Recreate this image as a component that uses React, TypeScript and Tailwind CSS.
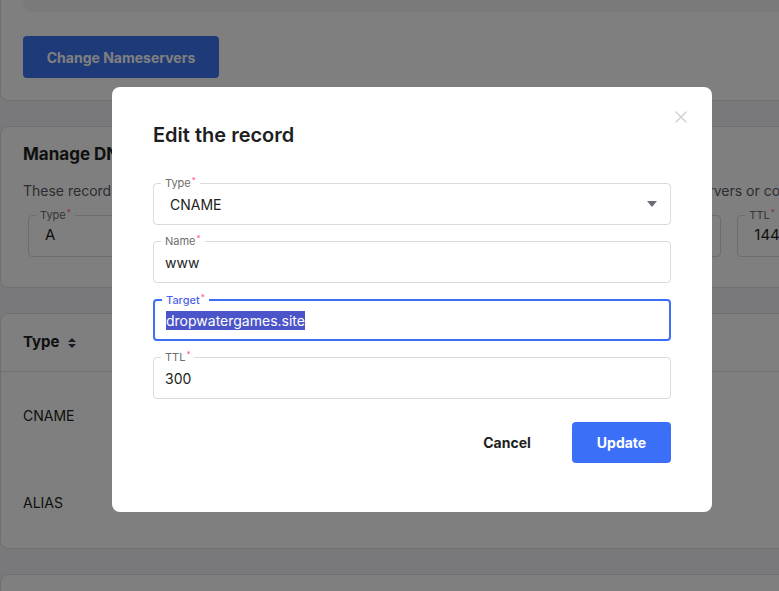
import { X } from 'lucide-react'

const Field = ({
  label,
  children,
  focused = false,
  select = false,
}: {
  label: string
  children: React.ReactNode
  focused?: boolean
  select?: boolean
}) => {
  return (
    <div
      className={`relative flex h-[42px] items-center rounded-[4px] bg-white ${
        focused ? 'border-2 border-[#3d6ef7] px-[11px]' : 'border border-[#dadada] px-[11px]'
      }`}
    >
      <span
        className={`absolute -top-[7px] left-[7px] bg-white px-[4px] text-[11px] leading-[13px] ${
          focused ? 'text-[#4f63ea] font-medium' : 'text-[#6d6d6d]'
        }`}
      >
        {label}
        <sup className="ml-[1px] text-[8px] text-[#fc5185]">*</sup>
      </span>
      <div className="flex-1 text-[14px] text-[#1d1e20]">{children}</div>
      {select && (
        <svg width="10" height="6" viewBox="0 0 10 6" className="mr-[2px]">
          <path d="M0 0h10L5 6z" fill="#6c6c7a" />
        </svg>
      )}
    </div>
  )
}

const BgInput = ({ label, value, className }: { label: string; value: string; className: string }) => (
  <div className={`relative flex h-[42px] items-center rounded-[4px] border border-[#dadada] px-[16px] ${className}`}>
    <span className="absolute -top-[7px] left-[7px] bg-white px-[4px] text-[11px] leading-[13px] text-[#6d6d6d]">
      {label}
      <sup className="ml-[1px] text-[8px] text-[#fc5185]">*</sup>
    </span>
    <span className="text-[15px] text-[#1d1e20]">{value}</span>
  </div>
)

export default function App() {
  return (
    <div
      className="relative h-[591px] w-[779px] overflow-hidden bg-[#f2f3f6]"
      style={{ fontFamily: 'Inter, "Noto Sans", sans-serif' }}
    >
      {/* page behind the dialog */}
      <div className="flex w-[900px] flex-col gap-[25px]">
        <div className="-mt-[40px] rounded-[8px] border border-[#dedede] bg-white px-[22px] pb-[22px] pt-[22px]">
          <div className="h-[29px] rounded-[8px] bg-[#f4f5f7]" />
          <button className="mt-[24px] h-[42px] w-[196px] rounded-[4px] bg-[#3d75f2] text-[14px] font-bold text-white">
            Change Nameservers
          </button>
        </div>

        <div className="h-[162px] rounded-[8px] border border-[#dedede] bg-white px-[22px] pt-[15px]">
          <h2 className="text-[17px] font-bold text-[#1d1e20]">Manage DNS records</h2>
          <p className="mt-[12px] whitespace-nowrap text-[14px] text-[#595a66]">
            These records define how your domain behaves. Common uses include pointing your domain at web servers or configuring email
          </p>
          <div className="mt-[14px] flex gap-[16px] pl-[5px]">
            <BgInput label="Type" value="A" className="w-[200px]" />
            <div className="h-[42px] w-[479px] rounded-[4px] border border-[#dadada]" />
            <BgInput label="TTL" value="14400" className="w-[140px] px-[10px]" />
          </div>
        </div>

        <div className="h-[236px] rounded-[8px] border border-[#dedede] bg-white">
          <div className="flex h-[58px] items-center border-b border-[#dedede] px-[22px]">
            <span className="text-[15px] font-bold text-[#1d1e20]">Type</span>
            <svg width="10" height="12" viewBox="0 0 10 12" className="ml-[7px]">
              <path d="M1 5l4-4 4 4zM1 7l4 4 4-4z" fill="#36344d" />
            </svg>
          </div>
          <div className="flex h-[87px] items-center px-[22px] text-[14px] text-[#1d1e20]">CNAME</div>
          <div className="flex h-[87px] items-center px-[22px] text-[14px] text-[#1d1e20]">ALIAS</div>
        </div>

        <div className="h-[80px] rounded-[8px] border border-[#dedede] bg-white" />
      </div>

      {/* overlay */}
      <div className="absolute inset-0 bg-black/50" />

      {/* dialog */}
      <div className="absolute left-[112px] top-[87px] h-[425px] w-[600px] rounded-[8px] bg-white px-[41px] pt-[35px]">
        <button className="absolute right-[21px] top-[20px] text-[#cfcfd4]">
          <X size={20} strokeWidth={1.6} />
        </button>
        <h1 className="text-[20px] font-semibold leading-[26px] text-[#1d1e20]">Edit the record</h1>
        <div className="mt-[35px] flex flex-col gap-[16px]">
          <Field label="Type" select>
            <span className="pl-[5px]">CNAME</span>
          </Field>
          <Field label="Name">www</Field>
          <Field label="Target" focused>
            <span className="bg-[#4b54c9] py-[1px] text-white">dropwatergames.site</span>
          </Field>
          <Field label="TTL">300</Field>
        </div>
        <div className="mt-[23px] flex items-center justify-end gap-[27px]">
          <button className="h-[41px] w-[76px] text-[14px] font-bold text-[#1d1e20]">Cancel</button>
          <button className="h-[41px] w-[99px] rounded-[4px] bg-[#3c6ff8] text-[14px] font-bold text-white">
            Update
          </button>
        </div>
      </div>
    </div>
  )
}
